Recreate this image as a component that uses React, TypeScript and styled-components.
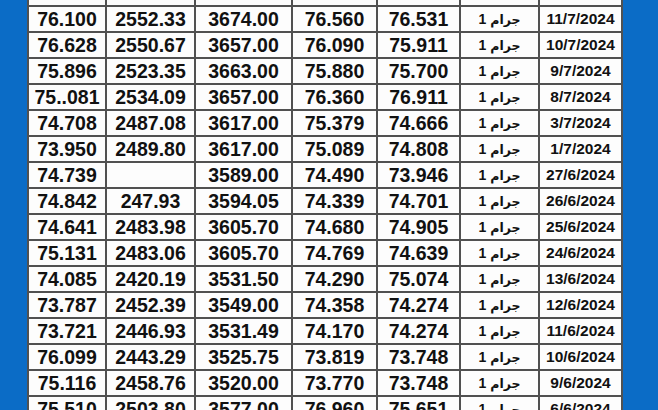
import React from "react";
import styled, { createGlobalStyle } from "styled-components";

const Global = createGlobalStyle`
  html, body { margin: 0; padding: 0; background: #0b6cc6; }
  body { width: 658px; height: 410px; overflow: hidden; }
`;

const Page = styled.div`
  width: 658px;
  height: 410px;
  overflow: hidden;
  background: #0b6cc6;
  padding-left: 27px;
  box-sizing: border-box;
`;

const Sheet = styled.div`
  display: grid;
  direction: rtl;
  width: 596px;
  box-sizing: border-box;
  grid-template-columns: 81px 77px 81px 83px 95px 87px 76px;
  grid-auto-rows: 24px;
  grid-template-rows: 5px;
  gap: 2px;
  background: #515151;
  border-left: 2px solid #515151;
  border-right: 2px solid #515151;
  font-family: "Liberation Sans", Arial, "DejaVu Sans", sans-serif;
  color: #111;
`;

type Kind = "num" | "date" | "unit";

const Cell = styled.div<{ $kind: Kind }>`
  background: #fdfdfd;
  display: flex;
  align-items: center;
  justify-content: center;
  font-weight: bold;
  white-space: nowrap;
  overflow: hidden;
  direction: ltr;
  font-size: ${(p) => (p.$kind === "num" ? "19.5px" : p.$kind === "date" ? "15.5px" : "14px")};
  padding-top: ${(p) => (p.$kind === "num" ? "1px" : "0")};
`;

const Unit = styled.span`
  direction: rtl;
  unicode-bidi: isolate;
`;

const UnitWord = styled.span`
  font-family: "DejaVu Sans", sans-serif;
  font-weight: bold;
  font-size: 12.5px;
`;

const rows: string[][] = [
  ["11/7/2024", "76.531", "76.560", "3674.00", "2552.33", "76.100"],
  ["10/7/2024", "75.911", "76.090", "3657.00", "2550.67", "76.628"],
  ["9/7/2024", "75.700", "75.880", "3663.00", "2523.35", "75.896"],
  ["8/7/2024", "76.911", "76.360", "3657.00", "2534.09", "75..081"],
  ["3/7/2024", "74.666", "75.379", "3617.00", "2487.08", "74.708"],
  ["1/7/2024", "74.808", "75.089", "3617.00", "2489.80", "73.950"],
  ["27/6/2024", "73.946", "74.490", "3589.00", "", "74.739"],
  ["26/6/2024", "74.701", "74.339", "3594.05", "247.93", "74.842"],
  ["25/6/2024", "74.905", "74.680", "3605.70", "2483.98", "74.641"],
  ["24/6/2024", "74.639", "74.769", "3605.70", "2483.06", "75.131"],
  ["13/6/2024", "75.074", "74.290", "3531.50", "2420.19", "74.085"],
  ["12/6/2024", "74.274", "74.358", "3549.00", "2452.39", "73.787"],
  ["11/6/2024", "74.274", "74.170", "3531.49", "2446.93", "73.721"],
  ["10/6/2024", "73.748", "73.819", "3525.75", "2443.29", "76.099"],
  ["9/6/2024", "73.748", "73.770", "3520.00", "2458.76", "75.116"],
  ["6/6/2024", "75.651", "76.960", "3577.00", "2503.80", "75.510"],
];

export default function App() {
  return (
    <>
      <Global />
      <Page>
        <Sheet>
          {Array.from({ length: 7 }).map((_, i) => (
            <Cell key={`h${i}`} $kind="num" />
          ))}
          {rows.map((r, ri) => (
            <React.Fragment key={ri}>
              <Cell $kind="date">{r[0]}</Cell>
              <Cell $kind="unit">
                <Unit>
                  <UnitWord>جرام</UnitWord> 1
                </Unit>
              </Cell>
              {r.slice(1).map((v, ci) => (
                <Cell key={ci} $kind="num">{v}</Cell>
              ))}
            </React.Fragment>
          ))}
        </Sheet>
      </Page>
    </>
  );
}
